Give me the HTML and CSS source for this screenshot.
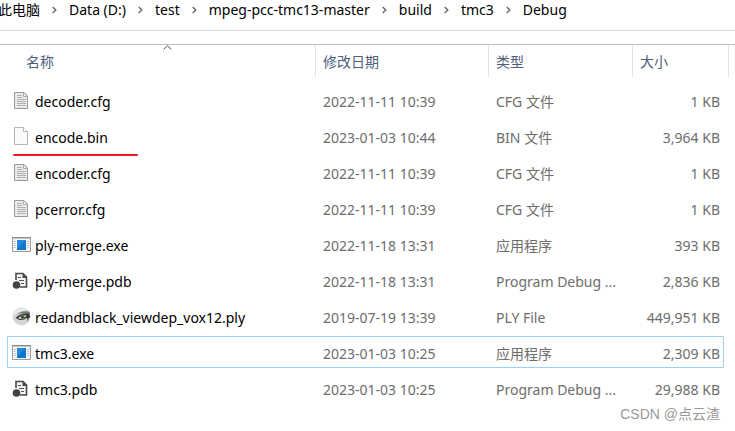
FILE: index.html
```html
<!DOCTYPE html>
<html lang="zh-CN">
<head>
    <meta charset="UTF-8">
    <meta name="viewport" content="width=device-width, initial-scale=1">
    <title>Debug</title>
    <link rel="stylesheet" href="styles.css">
</head>
<body>

<!-- shared icons -->
<svg class="sprite" aria-hidden="true">
    <symbol id="chevron" viewBox="0 0 5 8">
        <path d="M0.7 1 L3.8 4 L0.7 7" fill="none" stroke="#666" stroke-width="1.4"/>
    </symbol>
    <symbol id="text-file" viewBox="0 0 20 20">
        <path d="M3.5 1.5 H13 L16.5 5 V17.5 H3.5 Z" fill="#ebebeb" stroke="#989898"/>
        <path d="M12.5 1.5 L16.5 5.5 H12.5 Z" fill="#fff" stroke="#a8a8a8"/>
        <path d="M6 4.5 H11 M6 6.5 H11 M6 8.5 H15 M6 10.5 H15 M6 12.5 H15 M6 14.5 H15" stroke="#b0b0b0"/>
    </symbol>
    <symbol id="blank-file" viewBox="0 0 20 20">
        <path d="M3.5 0.5 H12.5 L16.5 4.5 V17.5 H3.5 Z" fill="#fafafa" stroke="#b4b4b4"/>
        <path d="M12.5 0.5 V4.5 H16.5" fill="#fff" stroke="#b4b4b4"/>
    </symbol>
    <symbol id="exe-file" viewBox="0 0 20 20">
        <path d="M1.5 2.5 H19.5 V16.5 H1.5 Z" fill="#f7f7f7" stroke="#9b9b9b"/>
        <path d="M1 2.5 H20" stroke="#8c8c8c"/>
        <path d="M2 3.5 H19" stroke="#c8c8c8"/>
        <path d="M2.5 6.5 H5 M2.5 8.5 H4.5 M2.5 10.5 H5 M2.5 12.5 H4.5 M16 6.5 H18 M16.5 8.5 H18 M16 10.5 H18 M16.5 12.5 H18" stroke="#bdbdbd"/>
        <rect x="6" y="5" width="9" height="10" fill="#0a78d0"/>
        <path d="M6 5 H15 L6 14 Z" fill="#2389dc"/>
    </symbol>
    <symbol id="pdb-file" viewBox="0 0 20 20">
        <path d="M5 9 V2.5 H12 L15.5 6 V16 H9" fill="#f6f6f6" stroke="#484848" stroke-width="1.6"/>
        <path d="M11.5 2.5 L16 7 H11.5 Z" fill="#484848"/>
        <path d="M7 6.5 H10 M8 9.5 H13 M10 12.5 H13" stroke="#555" stroke-width="1.2"/>
        <circle cx="5.5" cy="14" r="3.8" fill="#424242"/>
    </symbol>
    <symbol id="ply-file" viewBox="0 0 20 20">
        <circle cx="10.5" cy="9.5" r="9" fill="#d5d5d5"/>
        <path d="M2.5 6 Q8 -1 16 3 Q9 3 4 8 Z" fill="#ededed"/>
        <path d="M5 8 Q10 3 18.5 4.5 L19 7 Q11 4.500 5 8 Z" fill="#777"/>
        <path d="M4.500 11 Q10 5 18.500 6.500 L19 10 Q17 12 16 15 Q17 11 15.500 11 Q12 14 7.500 12.500 Z" fill="#3a3a3a"/>
        <path d="M7 11 Q11 7.500 15.500 8.500 Q13 12 9 12 Z" fill="#d4ddca"/>
        <circle cx="11.500" cy="10" r="2" fill="#5f8543"/>
        <circle cx="11.500" cy="10" r="0.900" fill="#161616"/>
    </symbol>
</svg>

<nav class="breadcrumb">
    <a href="#">此电脑</a>
    <svg class="chevron"><use href="#chevron"/></svg>
    <a href="#">Data (D:)</a>
    <svg class="chevron"><use href="#chevron"/></svg>
    <a href="#">test</a>
    <svg class="chevron"><use href="#chevron"/></svg>
    <a href="#">mpeg-pcc-tmc13-master</a>
    <svg class="chevron"><use href="#chevron"/></svg>
    <a href="#">build</a>
    <svg class="chevron"><use href="#chevron"/></svg>
    <a href="#">tmc3</a>
    <svg class="chevron"><use href="#chevron"/></svg>
    <a href="#">Debug</a>
</nav>

<main class="file-list">
    <table class="files">
        <thead>
            <tr>
                <th class="name" scope="col">
                    名称
                    <svg class="sort" viewBox="0 0 9 5"><path d="M0.7 4.3 L4.5 0.8 L8.3 4.3" fill="none" stroke="#555"/></svg>
                </th>
                <th class="date" scope="col">修改日期</th>
                <th class="type" scope="col">类型</th>
                <th class="size" scope="col">大小</th>
            </tr>
        </thead>
        <tbody>
            <tr>
                <td class="name"><div class="file"><svg class="icon"><use href="#text-file"/></svg>decoder.cfg</div></td>
                <td>2022-11-11 10:39</td>
                <td>CFG 文件</td>
                <td class="size">1 KB</td>
            </tr>
            <tr class="marked">
                <td class="name"><div class="file"><svg class="icon"><use href="#blank-file"/></svg>encode.bin</div></td>
                <td>2023-01-03 10:44</td>
                <td>BIN 文件</td>
                <td class="size">3,964 KB</td>
            </tr>
            <tr>
                <td class="name"><div class="file"><svg class="icon"><use href="#text-file"/></svg>encoder.cfg</div></td>
                <td>2022-11-11 10:39</td>
                <td>CFG 文件</td>
                <td class="size">1 KB</td>
            </tr>
            <tr>
                <td class="name"><div class="file"><svg class="icon"><use href="#text-file"/></svg>pcerror.cfg</div></td>
                <td>2022-11-11 10:39</td>
                <td>CFG 文件</td>
                <td class="size">1 KB</td>
            </tr>
            <tr>
                <td class="name"><div class="file"><svg class="icon"><use href="#exe-file"/></svg>ply-merge.exe</div></td>
                <td>2022-11-18 13:31</td>
                <td>应用程序</td>
                <td class="size">393 KB</td>
            </tr>
            <tr>
                <td class="name"><div class="file"><svg class="icon"><use href="#pdb-file"/></svg>ply-merge.pdb</div></td>
                <td>2022-11-18 13:31</td>
                <td>Program Debug ...</td>
                <td class="size">2,836 KB</td>
            </tr>
            <tr>
                <td class="name"><div class="file"><svg class="icon"><use href="#ply-file"/></svg>redandblack_viewdep_vox12.ply</div></td>
                <td>2019-07-19 13:39</td>
                <td>PLY File</td>
                <td class="size">449,951 KB</td>
            </tr>
            <tr class="focused">
                <td class="name"><div class="file"><svg class="icon"><use href="#exe-file"/></svg>tmc3.exe</div></td>
                <td>2023-01-03 10:25</td>
                <td>应用程序</td>
                <td class="size">2,309 KB</td>
            </tr>
            <tr>
                <td class="name"><div class="file"><svg class="icon"><use href="#pdb-file"/></svg>tmc3.pdb</div></td>
                <td>2023-01-03 10:25</td>
                <td>Program Debug ...</td>
                <td class="size">29,988 KB</td>
            </tr>
        </tbody>
    </table>
</main>

<div class="watermark">CSDN @点云渣</div>

</body>
</html>
```
FILE: styles.css
```css
* {
    box-sizing: border-box;
}
body {
    margin: 0;
    min-height: 100vh;
    position: relative;
    overflow-x: hidden;
    background-color: #fff;
    color: #000;
    font-family: "Noto Sans", "Noto Sans CJK SC", sans-serif;
    font-size: 14px;
    line-height: 20px;
}
.sprite {
    display: none;
}
.breadcrumb {
    display: flex;
    align-items: center;
    gap: 12px;
    height: 31px;
    margin-left: -2px;
    padding-bottom: 10px;
    border-bottom: 1px solid #d9d9d9;
    white-space: nowrap;
}
.breadcrumb a {
    color: inherit;
    text-decoration: none;
}
.chevron {
    flex: none;
    width: 5px;
    height: 8px;
}
.file-list {
    margin-top: 13px;
    padding-right: 6px;
    border-top: 1px solid #bdbdbd;
}
.files {
    width: 100%;
    table-layout: fixed;
    border-collapse: separate;
    border-spacing: 0;
}
.files th {
    height: 32px;
    padding: 2px 7px 0;
    border-right: 1px solid #e2e2e2;
    color: #4c607a;
    font-weight: normal;
    text-align: left;
}
.files th.name {
    position: relative;
    padding-left: 26px;
}
.files th.date {
    width: 173px;
}
.files th.type {
    width: 144px;
}
.files th.size {
    width: 96px;
}
.sort {
    position: absolute;
    top: 0;
    left: 50%;
    width: 9px;
    height: 5px;
    margin-left: 5px;
}
.files tbody::before {
    content: "";
    display: block;
    height: 5px;
}
.files tbody tr {
    position: relative;
}
.files td {
    height: 36px;
    padding: 3px 7px 0;
    color: #6d6d6d;
    white-space: nowrap;
}
.files td.name {
    padding-left: 11px;
    color: #000;
}
.files td.size {
    padding-right: 9px;
    text-align: right;
}
.file {
    display: flex;
    align-items: center;
    gap: 4px;
}
.icon {
    flex: none;
    width: 20px;
    height: 20px;
    margin-bottom: 2px;
}
.focused .name::after {
    content: "";
    position: absolute;
    inset: 2px 5px 2px 7px;
    border: 1px solid #99d1ff;
    border-radius: 1px;
}
/* red pen line under the generated bitstream */
.marked .name::after {
    content: "";
    position: absolute;
    left: 13px;
    bottom: -2px;
    width: 125px;
    height: 2px;
    border-radius: 1px;
    background-color: #ed1c24;
}
.watermark {
    position: absolute;
    right: 15px;
    bottom: 7px;
    color: #999;
    font-family: "Liberation Sans", "Noto Sans CJK SC", sans-serif;
}
```
